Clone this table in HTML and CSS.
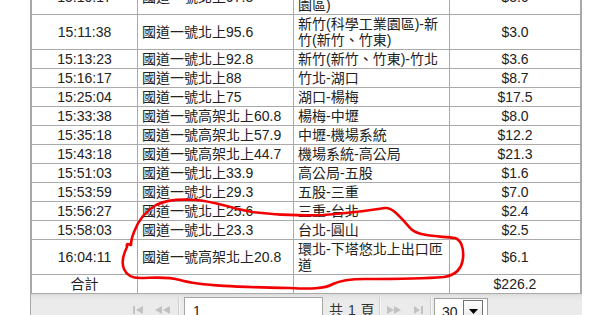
FILE: index.html
```html
<!DOCTYPE html>
<html lang="zh-Hant">
<head>
<meta charset="utf-8">
<title>通行費明細</title>
<link rel="stylesheet" href="styles.css">
</head>
<body>
<div class="grid">
  <table class="toll">
    <colgroup>
      <col class="c-time"><col class="c-gantry"><col class="c-seg"><col class="c-fee">
    </colgroup>
    <tbody>
      <tr><td class="ctr">15:10:17</td><td>國道一號北上97.3</td><td>頭份-新竹(科學工業<br>園區)</td><td class="ctr">$5.6</td></tr>
      <tr><td class="ctr">15:11:38</td><td>國道一號北上95.6</td><td>新竹(科學工業園區)-新竹(新竹、竹東)</td><td class="ctr">$3.0</td></tr>
      <tr><td class="ctr">15:13:23</td><td>國道一號北上92.8</td><td>新竹(新竹、竹東)-竹北</td><td class="ctr">$3.6</td></tr>
      <tr><td class="ctr">15:16:17</td><td>國道一號北上88</td><td>竹北-湖口</td><td class="ctr">$8.7</td></tr>
      <tr><td class="ctr">15:25:04</td><td>國道一號北上75</td><td>湖口-楊梅</td><td class="ctr">$17.5</td></tr>
      <tr><td class="ctr">15:33:38</td><td>國道一號高架北上60.8</td><td>楊梅-中壢</td><td class="ctr">$8.0</td></tr>
      <tr><td class="ctr">15:35:18</td><td>國道一號高架北上57.9</td><td>中壢-機場系統</td><td class="ctr">$12.2</td></tr>
      <tr><td class="ctr">15:43:18</td><td>國道一號高架北上44.7</td><td>機場系統-高公局</td><td class="ctr">$21.3</td></tr>
      <tr><td class="ctr">15:51:03</td><td>國道一號北上33.9</td><td>高公局-五股</td><td class="ctr">$1.6</td></tr>
      <tr><td class="ctr">15:53:59</td><td>國道一號北上29.3</td><td>五股-三重</td><td class="ctr">$7.0</td></tr>
      <tr><td class="ctr">15:56:27</td><td>國道一號北上25.6</td><td>三重-台北</td><td class="ctr">$2.4</td></tr>
      <tr><td class="ctr">15:58:03</td><td>國道一號北上23.3</td><td>台北-圓山</td><td class="ctr">$2.5</td></tr>
      <tr><td class="ctr">16:04:11</td><td>國道一號高架北上20.8</td><td>環北-下塔悠北上出口匝道</td><td class="ctr">$6.1</td></tr>
      <tr><td class="ctr">合計</td><td></td><td></td><td class="ctr">$226.2</td></tr>
    </tbody>
  </table>
  <div class="pager">
    <div class="pg-left">
      <svg class="ico" width="10" height="8" viewBox="0 0 10 8"><rect x="0" y="0" width="2" height="8"/><path d="M10 0 L3 4 L10 8 Z"/></svg>
      <svg class="ico ico-gap" width="15" height="8" viewBox="0 0 15 8"><path d="M7 0 L0 4 L7 8 Z M15 0 L8 4 L15 8 Z"/></svg>
    </div>
    <span class="sep"></span>
    <div class="pg-input">1</div>
    <span class="pg-text">共&nbsp;1&nbsp;頁</span>
    <span class="sep sep-2"></span>
    <div class="pg-right">
      <svg class="ico" width="14" height="8" viewBox="0 0 14 8"><path d="M0 0 L7 4 L0 8 Z M7 0 L14 4 L7 8 Z"/></svg>
      <svg class="ico ico-gap2" width="9" height="8" viewBox="0 0 9 8"><path d="M0 0 L6 4 L0 8 Z"/><rect x="7" y="0" width="2" height="8"/></svg>
    </div>
    <span class="sep sep-3"></span>
    <div class="pg-select">
      <span class="sel-val">30</span>
      <span class="sel-btn"><svg width="9" height="5" viewBox="0 0 9 5"><path d="M0 0 L9 0 L4.5 5 Z"/></svg></span>
    </div>
  </div>
</div>
<svg class="mark" width="597" height="315" viewBox="0 0 597 315">
  <path d="M131 245 C128 244,126 243,127 247 C124 253,121 262,124 269 C127 276,132 278,140 278 C152 278,166 276,180 280 C200 286,240 287,290 288 C310 289,324 289,333 284 C341 280,350 279,365 279 C390 279,420 279,444 277 C457 275,462 268,463 258 C464 248,461 240,455 238 C440 236,420 237,411 229 C402 219,393 207,385 208 C370 210,352 213,323 215 C300 216,275 215,252 212 C230 208,214 201,195 200 C180 199,166 200,156 205 C146 211,138 221,134 232 C132 237,131 241,131 245"/>
</svg>
</body>
</html>
```
FILE: styles.css
```css
html, body {
  margin: 0;
  padding: 0;
  background: #ffffff;
}

body {
  font-family: "Liberation Sans", "Noto Sans CJK TC", sans-serif;
  font-size: 14px;
  color: #222222;
  position: relative;
  width: 597px;
  height: 315px;
  overflow: hidden;
}

.grid {
  margin-top: -20px;
  margin-left: 30px;
  width: 550px;
  border-left: 1px solid #a8a8a8;
  border-right: 1px solid #a8a8a8;
}

.toll {
  border-collapse: separate;
  border-spacing: 0;
  table-layout: fixed;
  width: 550px;
  border-left: 1px solid #a8a8a8;
}

.c-time { width: 106px; }
.c-gantry { width: 156px; }
.c-seg { width: 156px; }
.c-fee { width: 131px; }

.toll td {
  box-sizing: border-box;
  padding: 1px 4px;
  line-height: 16px;
  vertical-align: middle;
  border-right: 1px solid #aaaaaa;
  border-bottom: 1px solid #aaaaaa;
  background: #ffffff;
  white-space: normal;
  word-break: normal;
}

.toll td.ctr {
  text-align: center;
}

.pager {
  height: 30px;
  background: linear-gradient(#dcdcdc 0px, #e6e6e6 3px, #ebebeb 8px, #ebebeb 100%);
  display: flex;
  align-items: flex-start;
  padding-top: 3px;
  box-sizing: border-box;
  border-left: 1px solid #a8a8a8;
  margin-left: -1px;
  width: 552px;
}

.pg-left {
  width: 147px;
  display: flex;
  justify-content: flex-end;
  align-items: center;
  height: 22px;
  padding-right: 8px;
  padding-top: 3px;
  box-sizing: border-box;
}

.ico {
  fill: #c2c2c2;
  display: block;
}

.ico-gap {
  margin-left: 12px;
}

.sep {
  width: 1px;
  height: 24px;
  background: #d0d0d0;
  box-shadow: 1px 0 0 #f6f6f6;
  display: block;
}

.pg-input {
  margin-left: 5px;
  width: 139px;
  height: 24px;
  box-sizing: border-box;
  border: 1px solid #a6a6a6;
  background: #ffffff;
  padding-left: 8px;
  line-height: 26px;
}

.pg-text {
  margin-left: 6px;
  line-height: 26px;
  color: #333333;
  letter-spacing: 0.5px;
}

.sep-2 {
  margin-left: 4px;
}

.pg-right {
  display: flex;
  align-items: center;
  height: 22px;
  padding-top: 3px;
  margin-left: 7px;
  box-sizing: border-box;
}

.ico-gap2 {
  margin-left: 13px;
}

.sep-3 {
  margin-left: 7px;
}

.pg-select {
  margin-left: 3px;
  margin-top: 1px;
  width: 54px;
  height: 24px;
  box-sizing: border-box;
  border: 1px solid #a0a0a0;
  background: #ffffff;
  display: flex;
  align-items: flex-start;
}

.sel-val {
  padding-left: 7px;
  width: 21px;
  line-height: 26px;
}

.sel-btn {
  margin-left: 0px;
  margin-top: 1px;
  width: 20px;
  height: 22px;
  box-sizing: border-box;
  border: 1px solid #707070;
  background: linear-gradient(#fdfdfd, #e8e8e8);
  display: flex;
  justify-content: center;
  padding-top: 8px;
}

.sel-btn svg {
  fill: #000000;
  display: block;
}

.mark {
  position: absolute;
  left: 0;
  top: 0;
  pointer-events: none;
  fill: none;
  stroke: #f20000;
  stroke-width: 2.6;
  stroke-linecap: round;
  stroke-linejoin: round;
}
```
